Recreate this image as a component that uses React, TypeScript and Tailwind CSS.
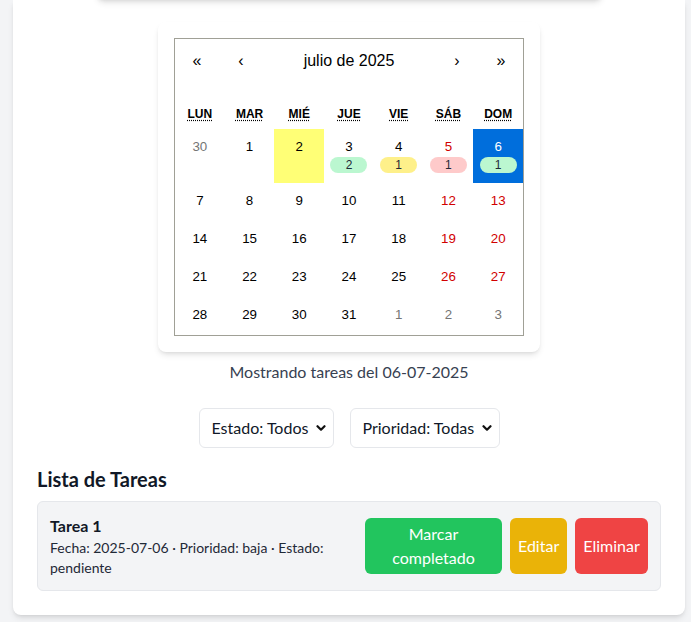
import React from "react";

const UI_FONT = "font-['Lato','Noto_Sans',sans-serif]";

type Tile = {
  d: number;
  kind?: "other" | "weekend" | "today" | "active";
  badge?: { n: number; color: string };
};

const rows: Tile[][] = [
  [
    { d: 30, kind: "other" },
    { d: 1 },
    { d: 2, kind: "today" },
    { d: 3, badge: { n: 2, color: "bg-[#bbf7d0]" } },
    { d: 4, badge: { n: 1, color: "bg-[#fef08a]" } },
    { d: 5, kind: "weekend", badge: { n: 1, color: "bg-[#fecaca]" } },
    { d: 6, kind: "active", badge: { n: 1, color: "bg-[#bbf7d0]" } },
  ],
  [7, 8, 9, 10, 11, 12, 13].map((d, i) => ({ d, kind: i >= 5 ? "weekend" : undefined } as Tile)),
  [14, 15, 16, 17, 18, 19, 20].map((d, i) => ({ d, kind: i >= 5 ? "weekend" : undefined } as Tile)),
  [21, 22, 23, 24, 25, 26, 27].map((d, i) => ({ d, kind: i >= 5 ? "weekend" : undefined } as Tile)),
  [
    { d: 28 },
    { d: 29 },
    { d: 30 },
    { d: 31 },
    { d: 1, kind: "other" },
    { d: 2, kind: "other" },
    { d: 3, kind: "other" },
  ],
];

const weekdays = ["Lun", "Mar", "Mié", "Jue", "Vie", "Sáb", "Dom"];

function DayTile({ t }: { t: Tile }) {
  const bg =
    t.kind === "today" ? "bg-[#ffff76]" : t.kind === "active" ? "bg-[#006edc]" : "bg-white";
  const color =
    t.kind === "other"
      ? "text-[#757575]"
      : t.kind === "weekend"
      ? "text-[#d10000]"
      : t.kind === "active"
      ? "text-white"
      : "text-black";
  return (
    <div className={`flex flex-col items-center py-[10px] text-[13.333px] leading-[16px] ${bg} ${color}`}>
      <span>{t.d}</span>
      <div className="mt-[2px] flex justify-center">
        {t.badge && (
          <span
            className={`flex h-[16px] w-[37px] items-center justify-center rounded-full text-[12px] leading-[16px] text-[#1f2937] ${t.badge.color}`}
          >
            {t.badge.n}
          </span>
        )}
      </div>
    </div>
  );
}

function Calendar() {
  return (
    <div className="w-[350px] border border-[#a0a096] bg-white font-['Liberation_Sans',Arial,sans-serif] leading-[1.125em] text-black">
      <div className="mb-4 flex h-[44px] items-center text-[16px]">
        <button className="h-full min-w-[44px]">«</button>
        <button className="h-full min-w-[44px]">‹</button>
        <button className="h-full flex-1">julio de 2025</button>
        <button className="h-full min-w-[44px]">›</button>
        <button className="h-full min-w-[44px]">»</button>
      </div>
      <div className="grid h-[30px] grid-cols-7 items-center text-center text-[12px] font-bold uppercase">
        {weekdays.map((w) => (
          <div key={w}>
            <abbr className="underline decoration-dotted underline-offset-[2px]" title={w}>
              {w}
            </abbr>
          </div>
        ))}
      </div>
      <div className="grid grid-cols-7">
        {rows.flat().map((t, i) => (
          <DayTile key={i} t={t} />
        ))}
      </div>
    </div>
  );
}

function Chevron() {
  return (
    <svg width="10" height="10" viewBox="0 0 10 10" fill="none" className="shrink-0">
      <path d="M1.5 3.2 L5 6.7 L8.5 3.2" stroke="#111" strokeWidth="2.2" strokeLinecap="round" strokeLinejoin="round" />
    </svg>
  );
}

function Select({ label, w }: { label: string; w: string }) {
  return (
    <div
      className={`flex h-[40px] items-center justify-between rounded-md border border-gray-200 bg-white pl-3 pr-[7px] text-[16px] text-gray-900 ${w}`}
    >
      <span className="whitespace-nowrap">{label}</span>
      <Chevron />
    </div>
  );
}

export default function App() {
  return (
    <div className={`min-h-screen bg-[#f3f4f6] pl-[13px] ${UI_FONT}`}>
      <div className="flex w-[672px] flex-col rounded-b-lg bg-white px-6 pb-6 shadow-md">
        <div className="mx-auto -mt-[30px] h-[30px] w-[507px] rounded-lg bg-white shadow-md" />
        <div className="mx-auto mt-[22px] rounded-lg bg-white p-4 shadow-md">
          <Calendar />
        </div>
        <p className="mt-2 text-center text-[16px] leading-6 text-[#374151]">
          Mostrando tareas del 06-07-2025
        </p>
        <div className="mt-6 flex justify-center gap-4">
          <Select label="Estado: Todos" w="w-[135px]" />
          <Select label="Prioridad: Todas" w="w-[150px]" />
        </div>
        <h2 className="mt-[17px] text-[20px] font-bold leading-7 text-[#111827]">Lista de Tareas</h2>
        <div className="mt-2 flex items-center gap-2 rounded-md border border-[#e5e7eb] bg-[#f3f4f6] p-3">
          <div className="flex-1">
            <div className="text-[16px] font-bold leading-6 text-[#111827]">Tarea 1</div>
            <div className="w-[290px] text-[14px] leading-5 text-[#1f2937]">
              Fecha: 2025-07-06 · Prioridad: baja · Estado: pendiente
            </div>
          </div>
          <div className="flex h-[56px] gap-2 text-[16px] leading-6 text-white">
            <button className="w-[137px] rounded-md bg-[#22c55e] px-2 py-1">Marcar completado</button>
            <button className="w-[57px] rounded-md bg-[#eab308] px-2 py-1">Editar</button>
            <button className="w-[73px] rounded-md bg-[#ef4444] px-2 py-1">Eliminar</button>
          </div>
        </div>
      </div>
    </div>
  );
}
